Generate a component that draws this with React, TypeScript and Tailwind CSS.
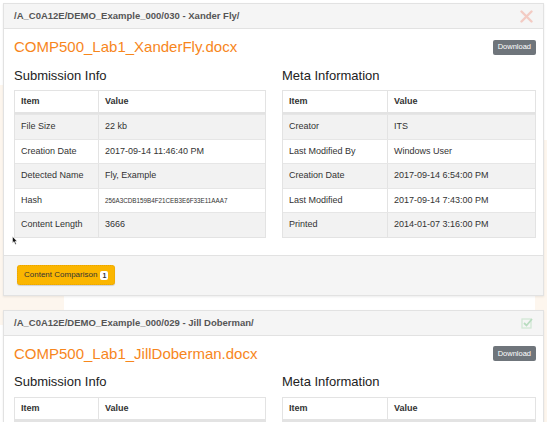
import React from "react";

type Row = [string, string, boolean?];

const submission: Row[] = [
  ["File Size", "22 kb"],
  ["Creation Date", "2017-09-14 11:46:40 PM"],
  ["Detected Name", "Fly, Example"],
  ["Hash", "256A3CDB159B4F21CEB3E6F33E11AAA7", true],
  ["Content Length", "3666"],
];

const meta: Row[] = [
  ["Creator", "ITS"],
  ["Last Modified By", "Windows User"],
  ["Creation Date", "2017-09-14 6:54:00 PM"],
  ["Last Modified", "2017-09-14 7:43:00 PM"],
  ["Printed", "2014-01-07 3:16:00 PM"],
];

const InfoTable = ({ rows, split }: { rows: Row[]; split: string }) => (
  <div className="border border-[#e3e3e3] text-[9px] text-[#333]">
    <div className="flex h-[23px] items-center border-b-2 border-[#e3e3e3] font-bold">
      <div className={`${split} h-full flex items-center pl-[6px] border-r border-[#e3e3e3]`}>Item</div>
      <div className="flex-1 pl-[6px]">Value</div>
    </div>
    {rows.map(([k, v, small], i) => (
      <div key={k} className={`flex h-[24.6px] items-center border-t border-[#e6e6e6] ${i % 2 === 0 ? "bg-[#f2f2f2]" : "bg-white"}`}>
        <div className={`${split} h-full flex items-center pl-[6px] border-r border-[#e3e3e3]`}>{k}</div>
        <div className={`flex-1 pl-[6px] ${small ? "text-[6.3px]" : ""}`}>{v}</div>
      </div>
    ))}
  </div>
);

const Card = ({ path, file, icon, footer, short }: { path: string; file: string; icon: React.ReactNode; footer?: boolean; short?: boolean }) => (
  <div className="border border-[#e2e2e2] bg-white shadow-[0_1px_2px_rgba(0,0,0,0.08)]">
    <div className="flex h-[25px] items-center justify-between border-b border-[#e2e2e2] bg-[#f5f5f5] pl-[10px] pr-[10px]">
      <span className="text-[9.5px] font-bold text-[#555]">{path}</span>
      {icon}
    </div>
    <div className="pl-[10px] pr-[7px]">
      <div className="flex h-[35px] items-center justify-between pt-[1px]">
        <span className="text-[15px] text-[#f7861c]">{file}</span>
        <button className="h-[15px] rounded-[2px] bg-[#6f757b] px-[5px] text-[7.5px] text-white">Download</button>
      </div>
      <div className="flex gap-[16px]">
        <div className="w-[252px]">
          <div className="flex h-[25px] items-end pb-[4px] text-[13px] text-[#222]">Submission Info</div>
          <div className="pt-[1px]">
            <InfoTable rows={short ? [] : submission} split="w-[84px]" />
          </div>
        </div>
        <div className="flex-1">
          <div className="flex h-[25px] items-end pb-[4px] text-[13px] text-[#222]">Meta Information</div>
          <div className="pt-[1px]">
            <InfoTable rows={short ? [] : meta} split="w-[105px]" />
          </div>
        </div>
      </div>
      {!short && <div className="h-[17px]" />}
    </div>
    {footer && (
      <div className="flex h-[40px] items-center border-t border-[#e2e2e2] bg-[#f5f5f5] pl-[13px]">
        <button className="flex h-[20px] items-center gap-[3px] rounded-[3px] border border-dotted border-[#e9a300] bg-[#fbb600] px-[6px] text-[8px] text-[#333] shadow-[0_1px_1px_rgba(0,0,0,0.15)]">
          Content Comparison
          <span className="rounded-[2px] bg-white px-[2px] text-[7px] font-bold leading-[9px]">1</span>
        </button>
      </div>
    )}
  </div>
);

const CloseIcon = () => (
  <svg width="13" height="13" viewBox="0 0 13 13">
    <path d="M1.5 1.5 L11.5 11.5 M11.5 1.5 L1.5 11.5" stroke="#f3cbc3" strokeWidth="2.4" strokeLinecap="round" />
  </svg>
);

const CheckIcon = () => (
  <svg width="12" height="12" viewBox="0 0 12 12">
    <rect x="1" y="2" width="9" height="9" fill="none" stroke="#cfe7d3" strokeWidth="1.2" />
    <path d="M3 6 L5.5 8.5 L11 2" fill="none" stroke="#b9dcc0" strokeWidth="1.8" />
  </svg>
);

export default function App() {
  return (
    <div className="relative h-[422px] w-[547px] overflow-hidden bg-white font-['Liberation_Sans',Arial,sans-serif]">
      <div className="absolute left-0 top-[85px] h-[240px] w-[64px] bg-[#fdf6ee]" />
      <div className="absolute right-0 top-[140px] h-[282px] w-[12px] bg-[#fdf6ee]" />
      <div className="relative px-[3px] pt-[3px]">
        <Card path="/A_C0A12E/DEMO_Example_000/030 - Xander Fly/" file="COMP500_Lab1_XanderFly.docx" icon={<CloseIcon />} footer />
        <div className="h-[14px]" />
        <Card path="/A_C0A12E/DEMO_Example_000/029 - Jill Doberman/" file="COMP500_Lab1_JillDoberman.docx" icon={<CheckIcon />} short />
      </div>
      <svg className="absolute left-[12px] top-[236px]" width="6" height="9" viewBox="0 0 6 9">
        <path d="M0.5 0.5 L0.5 7 L2 5.6 L3.3 8.5 L4.3 8 L3.1 5.3 L5 5.2 Z" fill="#111" stroke="#fff" strokeWidth="0.5" />
      </svg>
    </div>
  );
}
